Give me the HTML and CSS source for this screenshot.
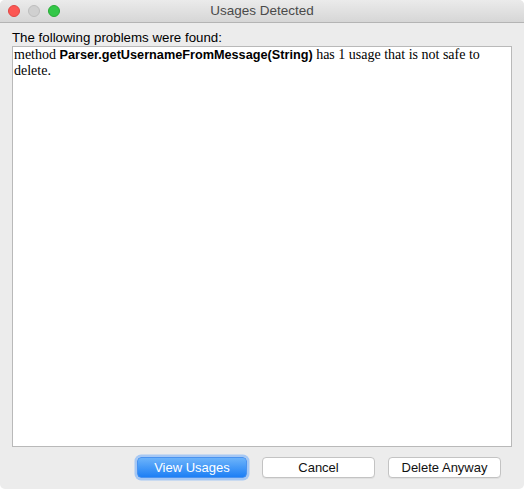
FILE: index.html
```html
<!DOCTYPE html>
<html>
<head>
<meta charset="utf-8">
<link rel="stylesheet" href="styles.css">
</head>
<body>
<div class="window">
  <div class="titlebar">
    <div class="lights">
      <span class="light red"></span>
      <span class="light gray"></span>
      <span class="light green"></span>
    </div>
    <div class="title">Usages Detected</div>
  </div>
  <div class="content">
    <div class="label">The following problems were found:</div>
    <div class="box">method <b>Parser.getUsernameFromMessage(String)</b> has 1 usage that is not safe to delete.</div>
    <div class="buttons">
      <button class="btn primary">View Usages</button>
      <button class="btn">Cancel</button>
      <button class="btn">Delete Anyway</button>
    </div>
  </div>
</div>
</body>
</html>
```

FILE: styles.css
```css
html, body {
  margin: 0;
  padding: 0;
  background: #ffffff;
}
.window {
  width: 524px;
  height: 489px;
  background: #ececec;
  border-radius: 5px;
  overflow: hidden;
  display: flex;
  flex-direction: column;
  font-family: "Liberation Sans", Arial, sans-serif;
}
.titlebar {
  height: 22px;
  flex: none;
  position: relative;
  background: linear-gradient(#ebebeb, #d6d6d6);
  border-bottom: 1px solid #b4b4b4;
  display: flex;
  align-items: center;
  justify-content: center;
}
.lights {
  position: absolute;
  left: 8px;
  top: 5px;
  display: flex;
  gap: 8px;
}
.light {
  width: 12px;
  height: 12px;
  border-radius: 50%;
  box-sizing: border-box;
}
.red { background: #fc5753; border: 1px solid #df4744; }
.gray { background: #d0d0d0; border: 1px solid #bdbdbd; }
.green { background: #33c748; border: 1px solid #27aa35; }
.title {
  font-size: 13.5px;
  color: #4a4a4a;
  line-height: 22px;
}
.content {
  flex: 1;
  display: flex;
  flex-direction: column;
  padding: 0 12px 0 12px;
}
.label {
  font-size: 13.3px;
  color: #000;
  margin-top: 7px;
  line-height: 16px;
  height: 16px;
}
.box {
  width: 500px;
  height: 401px;
  box-sizing: border-box;
  background: #fff;
  border: 1px solid #b9b9b9;
  padding: 0 1px;
  font-family: "Liberation Serif", "Times New Roman", serif;
  font-size: 14px;
  line-height: 15px;
  color: #000;
}
.box b {
  font-family: "Liberation Sans", Arial, sans-serif;
  font-weight: bold;
  font-size: 12.7px;
  line-height: 15px;
}
.buttons {
  display: flex;
  justify-content: flex-end;
  align-items: center;
  gap: 13px;
  margin-top: 10px;
  padding-right: 11px;
}
.btn {
  height: 21px;
  width: 113px;
  box-sizing: border-box;
  border: 1px solid #c3c3c3;
  border-radius: 4px;
  background: #fff;
  font-family: "Liberation Sans", Arial, sans-serif;
  font-size: 13px;
  color: #111;
  padding: 0;
  box-shadow: 0 1px 0 rgba(0,0,0,0.05);
}
.btn.primary {
  width: 110px;
  border: 1px solid #4a93f0;
  background: linear-gradient(#6cb3fa, #1d7ff5);
  color: #fff;
  box-shadow: 0 0 0 2.5px #a6c8f4;
  margin-right: 2px;
}
```
